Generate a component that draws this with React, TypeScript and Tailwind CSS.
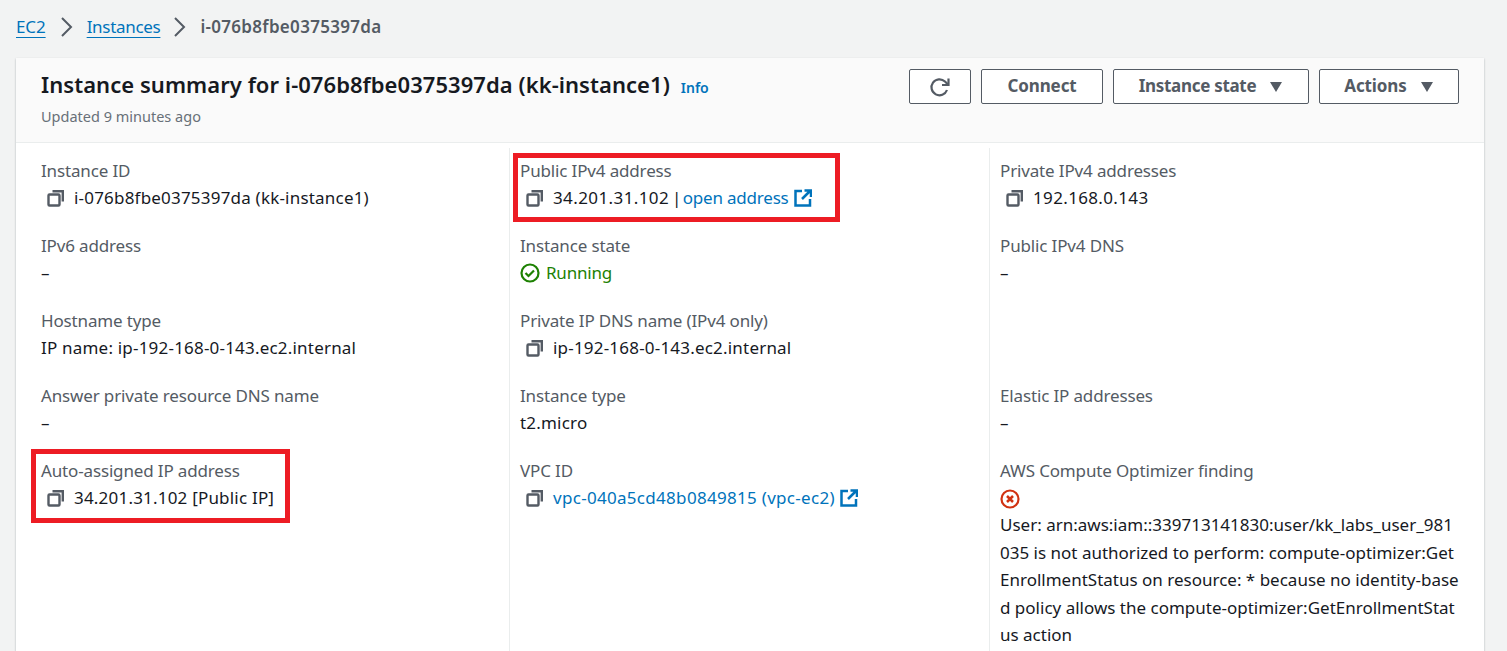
import type { ReactNode } from "react";

function CopyIcon() {
  return (
    <svg width="18" height="18" viewBox="0 0 18 18" fill="none" stroke="#545b64" strokeWidth="2.400" className="shrink-0">
      <rect x="1.500" y="5.500" width="11" height="11" rx="1" />
      <path d="M5.500 2.200h10.300v10.300" />
    </svg>
  );
}

function ExternalIcon() {
  return (
    <svg width="18" height="18" viewBox="0 0 18 18" fill="none" stroke="#0073bb" strokeWidth="2.500" className="ml-[5px] shrink-0">
      <path d="M8 2H1.500v14.500h14.500V10" />
      <path d="M8 10l8-8M10.500 1.500h6.500V8" />
    </svg>
  );
}

function Field({ label, children }: { label: string; children: ReactNode }) {
  return (
    <div className="h-[75px]">
      <div className="text-[#545b64] leading-[24px] h-[27px] tracking-[-0.15px]">{label}</div>
      <div className="leading-[24px] text-[#16191f] tracking-[0.2px]">{children}</div>
    </div>
  );
}

function Copyable({ children }: { children: ReactNode }) {
  return (
    <div className="flex items-center pl-[6px]">
      <CopyIcon />
      <span className="ml-[9px] whitespace-nowrap flex items-center">{children}</span>
    </div>
  );
}

function Button({ children, className = "" }: { children: ReactNode; className?: string }) {
  return (
    <button className={"h-[35px] flex items-center justify-center rounded-[2px] border border-[#545b64] bg-white text-[#545b64] font-bold tracking-[-0.1px] pb-[2px] " + className}>
      {children}
    </button>
  );
}

function Caret() {
  return (
    <svg width="14" height="12" viewBox="0 0 14 12" className="ml-[13px] mt-[2px]">
      <path d="M1 1h12L7 11z" fill="#545b64" />
    </svg>
  );
}

function Chevron({ className = "" }: { className?: string }) {
  return (
    <svg width="14" height="20" viewBox="0 0 14 20" fill="none" stroke="#545b64" strokeWidth="2" className={"mr-[13px] " + className}>
      <path d="M2 1l9 9-9 9" />
    </svg>
  );
}

export default function App() {
  return (
    <div className="relative h-[651px] overflow-hidden bg-[#f2f3f3] text-[17px] font-['Noto_Sans',sans-serif]">
      <nav className="flex items-center h-[58px] pl-[16px] pb-[5px]">
        <a className="text-[#0073bb] underline underline-offset-[4px] tracking-[-0.1px]">EC2</a>
        <Chevron className="ml-[14px]" />
        <a className="text-[#0073bb] underline underline-offset-[4px] tracking-[-0.3px]">Instances</a>
        <Chevron className="ml-[13px]" />
        <span className="text-[#545b64] font-semibold tracking-[0.3px]">i-076b8fbe0375397da</span>
      </nav>

      <div className="mx-[16px] w-[1468px] bg-white shadow-[0_1px_2px_rgba(0,28,36,0.3)]">
        <div className="flex justify-between h-[85px] bg-[#fafafa] border-b border-[#eaeded] pl-[25px] pr-[25px] pt-[11px]">
          <div>
            <div className="flex items-baseline -mt-[1px]">
              <h1 className="text-[22px] font-semibold leading-[32px] text-[#16191f] tracking-[0.05px]">
                Instance summary for i-076b8fbe0375397da (kk-instance1)
              </h1>
              <span className="ml-[11px] text-[14px] font-semibold text-[#0073bb]">Info</span>
            </div>
            <div className="mt-[6px] text-[14.500px] leading-[20px] text-[#687078]">Updated 9 minutes ago</div>
          </div>
          <div className="flex gap-[10px]">
            <Button className="w-[62px]">
              <svg width="22" height="22" viewBox="0 0 22 22" fill="none" stroke="#545b64" strokeWidth="2.200" className="mt-[2px]">
                <path d="M18 14a8 8 0 1 1-2-8.500l3 3" />
                <path d="M19.500 2.500v6.500H13" />
              </svg>
            </Button>
            <Button className="w-[122px]">Connect</Button>
            <Button className="w-[196px]"><span className="tracking-[-0.3px]">Instance state</span><Caret /></Button>
            <Button className="w-[140px]">Actions<Caret /></Button>
          </div>
        </div>

        <div className="grid grid-cols-[493px_480px_495px] pt-[5px] h-[509px]">
          <div className="pl-[25px] pt-[11px]">
            <Field label="Instance ID"><Copyable>i-076b8fbe0375397da (kk-instance1)</Copyable></Field>
            <Field label="IPv6 address">–</Field>
            <Field label="Hostname type">IP name: ip-192-168-0-143.ec2.internal</Field>
            <Field label="Answer private resource DNS name">–</Field>
            <Field label="Auto-assigned IP address"><Copyable>34.201.31.102 [Public IP]</Copyable></Field>
          </div>
          <div className="border-l border-[#eaeded] pl-[10px] pt-[11px]">
            <Field label="Public IPv4 address">
              <Copyable>
                <span className="tracking-[0.4px]">34.201.31.102</span>
                <span className="ml-[3px]">|</span>
                <a className="ml-[1px] text-[#0073bb] tracking-[-0.2px]">open address</a>
                <ExternalIcon />
              </Copyable>
            </Field>
            <Field label="Instance state">
              <div className="flex items-center text-[#1d8102] tracking-[-0.2px]">
                <svg width="20" height="20" viewBox="0 0 20 20" fill="none" stroke="#1d8102" strokeWidth="2.200" className="mr-[6px]">
                  <circle cx="10" cy="10" r="8.500" />
                  <path d="M5.500 10l3 3 5.500-5.500" />
                </svg>
                Running
              </div>
            </Field>
            <Field label="Private IP DNS name (IPv4 only)"><Copyable>ip-192-168-0-143.ec2.internal</Copyable></Field>
            <Field label="Instance type">t2.micro</Field>
            <Field label="VPC ID">
              <Copyable>
                <a className="text-[#0073bb] tracking-[0.3px]">vpc-040a5cd48b0849815 (vpc-ec2)</a>
                <ExternalIcon />
              </Copyable>
            </Field>
          </div>
          <div className="border-l border-[#eaeded] pl-[10px] pr-[24px] pt-[11px]">
            <Field label="Private IPv4 addresses"><Copyable><span className="tracking-[0.35px]">192.168.0.143</span></Copyable></Field>
            <Field label="Public IPv4 DNS">–</Field>
            <div className="h-[75px]" />
            <Field label="Elastic IP addresses">–</Field>
            <div>
              <div className="text-[#545b64] leading-[24px] h-[27px] tracking-[-0.15px]">AWS Compute Optimizer finding</div>
              <svg width="20" height="20" viewBox="0 0 20 20" fill="none" stroke="#d13212" strokeWidth="2.200" className="block mt-[3px]">
                <circle cx="10" cy="10" r="8.500" />
                <path d="M7 7l6 6M13 7l-6 6" strokeWidth="2.500" />
              </svg>
              <div className="mt-[2px] leading-[27.500px] text-[#16191f] whitespace-nowrap">
                User: arn:aws:iam::339713141830:user/kk_labs_user_981<br />
                035 is not authorized to perform: compute-optimizer:Get<br />
                EnrollmentStatus on resource: * because no identity-base<br />
                d policy allows the compute-optimizer:GetEnrollmentStat<br />
                us action
              </div>
            </div>
          </div>
        </div>
      </div>

      <div className="absolute left-[513px] top-[153px] w-[327px] h-[69px] border-[5px] border-[#ed1c24]" />
      <div className="absolute left-[31px] top-[449px] w-[259px] h-[74px] border-[5px] border-[#ed1c24]" />
    </div>
  );
}
